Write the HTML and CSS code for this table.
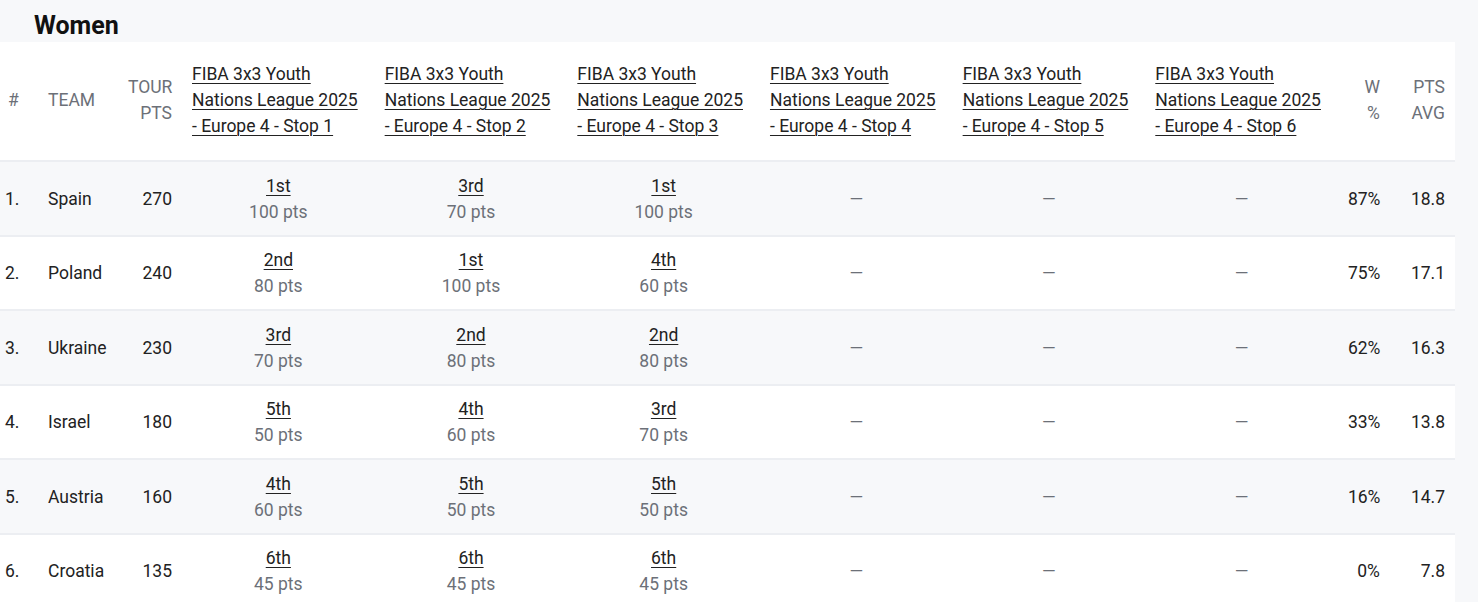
FILE: index.html
```html
<!DOCTYPE html>
<html lang="en">
<head>
<meta charset="utf-8">
<title>Women standings</title>
<link rel="stylesheet" href="styles.css">
</head>
<body>
<section class="standings">
  <h2 class="title">Women</h2>
  <table class="table">
    <colgroup>
      <col class="c-rank"><col class="c-team"><col class="c-tour">
      <col class="c-ev"><col class="c-ev"><col class="c-ev"><col class="c-ev"><col class="c-ev"><col class="c-ev">
      <col class="c-w"><col class="c-avg">
    </colgroup>
    <thead>
      <tr>
        <th class="rank">#</th>
        <th class="team">TEAM</th>
        <th class="num">TOUR PTS</th>
        <th class="ev"><a href="#">FIBA 3x3 Youth Nations League 2025 - Europe 4 - Stop 1</a></th>
        <th class="ev"><a href="#">FIBA 3x3 Youth Nations League 2025 - Europe 4 - Stop 2</a></th>
        <th class="ev"><a href="#">FIBA 3x3 Youth Nations League 2025 - Europe 4 - Stop 3</a></th>
        <th class="ev"><a href="#">FIBA 3x3 Youth Nations League 2025 - Europe 4 - Stop 4</a></th>
        <th class="ev"><a href="#">FIBA 3x3 Youth Nations League 2025 - Europe 4 - Stop 5</a></th>
        <th class="ev"><a href="#">FIBA 3x3 Youth Nations League 2025 - Europe 4 - Stop 6</a></th>
        <th class="num wpct">W %</th>
        <th class="num">PTS AVG</th>
      </tr>
    </thead>
    <tbody>
      <tr>
        <td class="rank">1.</td><td class="team">Spain</td><td class="num">270</td>
        <td class="res"><a href="#">1st</a><span class="pts">100 pts</span></td>
        <td class="res"><a href="#">3rd</a><span class="pts">70 pts</span></td>
        <td class="res"><a href="#">1st</a><span class="pts">100 pts</span></td>
        <td class="res dash">—</td><td class="res dash">—</td><td class="res dash">—</td>
        <td class="num">87%</td><td class="num">18.8</td>
      </tr>
      <tr>
        <td class="rank">2.</td><td class="team">Poland</td><td class="num">240</td>
        <td class="res"><a href="#">2nd</a><span class="pts">80 pts</span></td>
        <td class="res"><a href="#">1st</a><span class="pts">100 pts</span></td>
        <td class="res"><a href="#">4th</a><span class="pts">60 pts</span></td>
        <td class="res dash">—</td><td class="res dash">—</td><td class="res dash">—</td>
        <td class="num">75%</td><td class="num">17.1</td>
      </tr>
      <tr>
        <td class="rank">3.</td><td class="team">Ukraine</td><td class="num">230</td>
        <td class="res"><a href="#">3rd</a><span class="pts">70 pts</span></td>
        <td class="res"><a href="#">2nd</a><span class="pts">80 pts</span></td>
        <td class="res"><a href="#">2nd</a><span class="pts">80 pts</span></td>
        <td class="res dash">—</td><td class="res dash">—</td><td class="res dash">—</td>
        <td class="num">62%</td><td class="num">16.3</td>
      </tr>
      <tr>
        <td class="rank">4.</td><td class="team">Israel</td><td class="num">180</td>
        <td class="res"><a href="#">5th</a><span class="pts">50 pts</span></td>
        <td class="res"><a href="#">4th</a><span class="pts">60 pts</span></td>
        <td class="res"><a href="#">3rd</a><span class="pts">70 pts</span></td>
        <td class="res dash">—</td><td class="res dash">—</td><td class="res dash">—</td>
        <td class="num">33%</td><td class="num">13.8</td>
      </tr>
      <tr>
        <td class="rank">5.</td><td class="team">Austria</td><td class="num">160</td>
        <td class="res"><a href="#">4th</a><span class="pts">60 pts</span></td>
        <td class="res"><a href="#">5th</a><span class="pts">50 pts</span></td>
        <td class="res"><a href="#">5th</a><span class="pts">50 pts</span></td>
        <td class="res dash">—</td><td class="res dash">—</td><td class="res dash">—</td>
        <td class="num">16%</td><td class="num">14.7</td>
      </tr>
      <tr>
        <td class="rank">6.</td><td class="team">Croatia</td><td class="num">135</td>
        <td class="res"><a href="#">6th</a><span class="pts">45 pts</span></td>
        <td class="res"><a href="#">6th</a><span class="pts">45 pts</span></td>
        <td class="res"><a href="#">6th</a><span class="pts">45 pts</span></td>
        <td class="res dash">—</td><td class="res dash">—</td><td class="res dash">—</td>
        <td class="num">0%</td><td class="num">7.8</td>
      </tr>
    </tbody>
  </table>
</section>
</body>
</html>
```
FILE: styles.css
```css
html, body {
  margin: 0;
  padding: 0;
  background: #f7f8fa;
  font-family: Roboto, "Noto Sans", Arial, sans-serif;
  color: #222;
}
.standings {
  width: 1455px;
}
.title {
  margin: 0;
  padding: 10px 0 0 34px;
  height: 42px;
  box-sizing: border-box;
  font-size: 25px;
  line-height: 32px;
  font-weight: 700;
  color: #111;
}
.table {
  width: 1455px;
  border-collapse: collapse;
  table-layout: fixed;
  font-size: 17.5px;
  line-height: 26px;
}
.c-rank { width: 38px; }
.c-team { width: 80px; }
.c-tour { width: 64px; }
.c-ev { width: 192.67px; }
.c-w { width: 52px; }
.c-avg { width: 65px; }
thead tr {
  background: #fff;
  border-bottom: 2px solid #eceef2;
}
th {
  padding: 19px 10px 21px;
  font-weight: 400;
  text-align: left;
  vertical-align: middle;
  color: #6c7078;
}
th.wpct { padding-left: 24px; }
a {
  color: #222;
  text-decoration: underline;
  text-underline-offset: 3px;
  text-decoration-thickness: 1px;
}
tbody tr { border-bottom: 2px solid #eceef2; }
tbody tr:nth-child(odd) { background: #f7f8fa; }
tbody tr:nth-child(even) { background: #fff; }
td {
  padding: 10.5px 10px 10px;
  vertical-align: middle;
  color: #222;
}
.rank { padding-left: 5px; padding-right: 0; }
th.rank { padding-left: 8px; }
.num { text-align: right; }
.res { text-align: center; }
.res a, .res .pts { display: block; }
.pts { color: #6c7078; }
.dash { color: #6c7078; }
```
